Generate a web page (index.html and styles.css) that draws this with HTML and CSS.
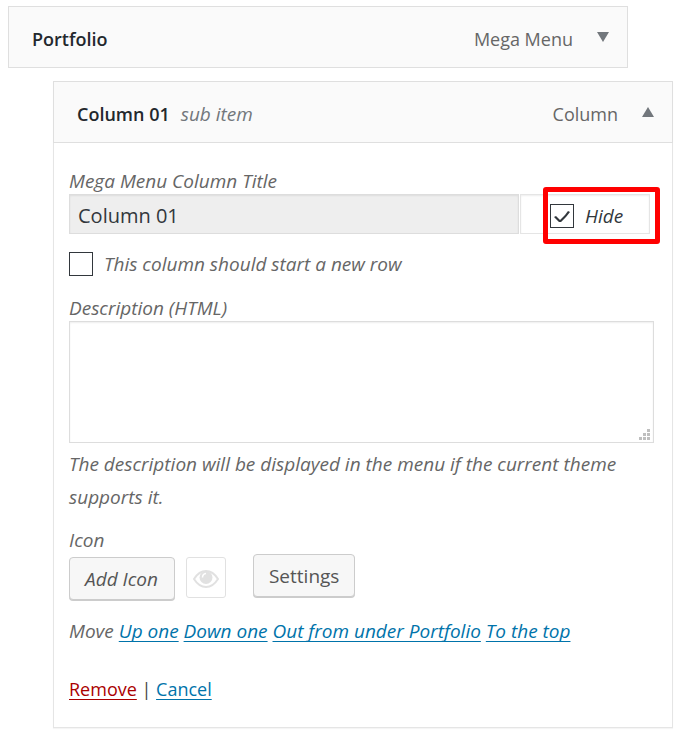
FILE: index.html
```html
<!DOCTYPE html>
<html lang="en">
<head>
<meta charset="utf-8">
<title>Menu structure</title>
<link rel="stylesheet" href="styles.css">
</head>
<body>
<main class="menu">
  <section class="item">
    <header class="bar">
      <h2 class="bar-title">Portfolio</h2>
      <span class="bar-type">Mega Menu</span>
      <button class="toggle" type="button" aria-label="Expand Portfolio">
        <svg width="12" height="10" viewBox="0 0 12 10"><path d="M0 0h12L6 10z" fill="#72777c"/></svg>
      </button>
    </header>
  </section>
  <section class="item item-sub">
    <header class="bar">
      <h2 class="bar-title">Column 01</h2>
      <span class="bar-note">sub item</span>
      <span class="bar-type">Column</span>
      <button class="toggle" type="button" aria-label="Collapse Column 01">
        <svg width="12" height="10" viewBox="0 0 12 10"><path d="M0 10h12L6 0z" fill="#72777c"/></svg>
      </button>
    </header>
    <form class="settings">
      <label class="label" for="title">Mega Menu Column Title</label>
      <div class="title-row">
        <input class="title-input" id="title" type="text" value="Column 01" readonly>
        <div class="hide-box">
          <label class="check hide-check"><input class="tick" type="checkbox" checked>Hide</label>
          <span class="highlight"></span>
        </div>
      </div>
      <label class="check row-check"><input class="tick" type="checkbox">This column should start a new row</label>
      <label class="label" for="description">Description (HTML)</label>
      <div class="area-wrap">
        <textarea class="area" id="description"></textarea>
        <svg class="grip" width="11" height="11" viewBox="0 0 11 11"><path d="M8 0h3v3H8zM4 4h3v3H4zM8 4h3v3H8zM0 8h3v3H0zM4 8h3v3H4zM8 8h3v3H8z" fill="#bfbfbf"/></svg>
      </div>
      <p class="hint">The description will be displayed in the menu if the current theme supports it.</p>
      <span class="label">Icon</span>
      <div class="actions">
        <button class="button button-icon" type="button">Add Icon</button>
        <button class="preview" type="button" aria-label="Preview icon">
          <svg width="26" height="18" viewBox="0 0 26 18"><path d="M1 9Q6 1 13 1t12 8q-5 8-12 8T1 9z" fill="none" stroke="#e1e1e1" stroke-width="2"/><circle cx="13" cy="7.500" r="6.500" fill="#e1e1e1"/><path d="M9.500 7.500Q9.500 4 13 3.500" fill="none" stroke="#fff" stroke-width="1.500"/></svg>
        </button>
        <button class="button button-settings" type="button">Settings</button>
      </div>
      <p class="move">Move <a href="#up">Up one</a> <a href="#down">Down one</a> <a href="#out">Out from under Portfolio</a> <a href="#top">To the top</a></p>
      <p class="links"><a class="remove" href="#remove">Remove</a> | <a href="#cancel">Cancel</a></p>
    </form>
  </section>
</main>
</body>
</html>
```
FILE: styles.css
```css
* {
  box-sizing: border-box;
}

body {
  margin: 0;
  background: #fff;
  color: #666;
  font: 19px/26px "Segoe UI", "Open Sans", "Noto Sans", sans-serif;
}

p, h2 {
  margin: 0;
}

a {
  color: #0073aa;
  text-decoration-thickness: 1px;
  text-underline-offset: 3px;
  text-decoration-skip-ink: none;
}

.menu {
  padding: 6px 10px 9px 8px;
}

.item {
  margin-right: 45px;
}

.item-sub {
  margin: 13px 0 0 45px;
  border: 1px solid #e5e5e5;
  border-top: 0;
  box-shadow: 0 1px 1px rgba(0, 0, 0, 0.04);
}

.bar {
  display: flex;
  align-items: center;
  height: 62px;
  padding: 3px 18px 0 23px;
  border: 1px solid #dfdfdf;
  background: #fafafa;
}

.item-sub .bar {
  margin: 0 -1px;
}

.bar-title {
  color: #23282d;
  font-size: 18px;
  font-weight: 600;
}

.bar-note {
  margin-left: 11px;
  color: #72777c;
  font-style: italic;
}

.bar-type {
  margin-left: auto;
  font-size: 18px;
}

.toggle {
  display: flex;
  margin-left: 24px;
  padding: 0 0 4px;
  border: 0;
  background: none;
}

.settings {
  padding: 25px 18px 25px 15px;
}

.label {
  display: block;
  font-style: italic;
}

.title-row {
  display: flex;
  gap: 1px;
  margin-right: 4px;
}

.title-input {
  flex: 1;
  min-width: 0;
  height: 40px;
  padding: 2px 8px 0;
  border: 1px solid #ddd;
  background: #eee;
  box-shadow: inset 0 1px 2px rgba(0, 0, 0, 0.07);
  color: #32373c;
  font: inherit;
  font-size: 20px;
}

.hide-box {
  position: relative;
  display: flex;
  width: 130px;
  padding-left: 29px;
  border: 1px solid #e5e5e5;
  box-shadow: inset 0 1px 2px rgba(0, 0, 0, 0.07);
}

.highlight {
  position: absolute;
  inset: -8px -11px -11px 22px;
  border: 5px solid #f00;
  border-radius: 3px;
  pointer-events: none;
}

.check {
  display: flex;
  align-items: center;
  gap: 11px;
  font-style: italic;
}

.hide-check {
  color: #32373c;
  padding-top: 4px;
}

.row-check {
  margin: 17px 0 18px;
}

.tick {
  width: 24px;
  height: 24px;
  margin: 0;
  border: 1px solid #32373c;
  background: #fff;
  appearance: none;
}

.tick:checked::before {
  content: "";
  display: block;
  width: 18px;
  height: 14px;
  margin: 5px 2px;
  background: #32373c;
  clip-path: path("M1 7L3 6L7 10L12 5L15 1L17 2L13 7L8 12L6 12Z");
}

.area-wrap {
  position: relative;
  display: flex;
}

.area {
  flex: 1;
  height: 122px;
  border: 1px solid #ddd;
  box-shadow: inset 0 1px 2px rgba(0, 0, 0, 0.07);
  font: inherit;
  resize: none;
}

.grip {
  position: absolute;
  right: 4px;
  bottom: 3px;
}

.hint {
  margin: 5px 0 13px;
  font-style: italic;
  line-height: 33px;
}

.actions {
  display: flex;
  align-items: flex-start;
  padding-top: 1px;
}

.button {
  height: 43px;
  padding: 0 15px;
  border: 1px solid #ccc;
  border-radius: 4px;
  background: #f7f7f7;
  box-shadow: 0 1px 0 #ccc;
  color: #555;
  font: inherit;
}

.button-icon {
  margin-top: 3px;
  padding-right: 16px;
  font-style: italic;
}

.preview {
  display: grid;
  place-items: center;
  width: 40px;
  height: 41px;
  margin: 3px 27px 0 11px;
  padding: 3px 0 0;
  border: 1px solid #e1e1e1;
  border-radius: 3px;
  background: #fff;
}

.move {
  margin: 18px 0 32px;
  font-style: italic;
}

.links {
  color: #444;
  font-size: 18px;
}

.remove {
  color: #a00;
}
```
